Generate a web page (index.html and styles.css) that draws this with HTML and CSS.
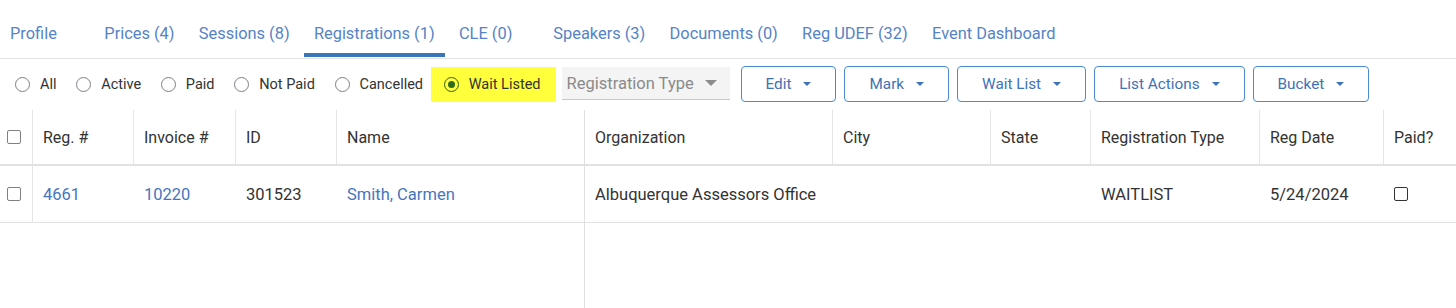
FILE: index.html
```html
<!DOCTYPE html>
<html>
<head>
<meta charset="utf-8">
<link rel="stylesheet" href="styles.css">
</head>
<body>
<nav class="tabs">
  <a class="tab">Profile</a>
  <a class="tab">Prices (4)</a>
  <a class="tab">Sessions (8)</a>
  <a class="tab active">Registrations (1)</a>
  <a class="tab">CLE (0)</a>
  <a class="tab">Speakers (3)</a>
  <a class="tab">Documents (0)</a>
  <a class="tab">Reg UDEF (32)</a>
  <a class="tab">Event Dashboard</a>
</nav>
<div class="toolbar">
  <div class="radios">
    <label class="radio"><span class="circle"></span>All</label>
    <label class="radio"><span class="circle"></span>Active</label>
    <label class="radio"><span class="circle"></span>Paid</label>
    <label class="radio"><span class="circle"></span>Not Paid</label>
    <label class="radio"><span class="circle"></span>Cancelled</label>
    <label class="radio selected"><span class="circle"></span>Wait Listed</label>
  </div>
  <div class="select">Registration Type<span class="sel-caret"></span></div>
  <div class="buttons">
    <button class="btn">Edit<span class="caret"></span></button>
    <button class="btn">Mark<span class="caret"></span></button>
    <button class="btn">Wait List<span class="caret"></span></button>
    <button class="btn">List Actions<span class="caret"></span></button>
    <button class="btn">Bucket<span class="caret"></span></button>
  </div>
</div>
<div class="grid">
  <div class="pane left">
    <div class="hrow">
      <div class="cell cb-col"><span class="check"></span></div>
      <div class="cell c-reg">Reg. #</div>
      <div class="cell c-inv">Invoice #</div>
      <div class="cell c-id">ID</div>
      <div class="cell c-name last">Name</div>
    </div>
    <div class="drow">
      <div class="cell cb-col"><span class="check"></span></div>
      <div class="cell c-reg link">4661</div>
      <div class="cell c-inv link">10220</div>
      <div class="cell c-id">301523</div>
      <div class="cell c-name link">Smith, Carmen</div>
    </div>
  </div>
  <div class="pane right">
    <div class="hrow">
      <div class="cell c-org">Organization</div>
      <div class="cell c-city">City</div>
      <div class="cell c-state">State</div>
      <div class="cell c-type">Registration Type</div>
      <div class="cell c-date">Reg Date</div>
      <div class="cell c-paid last">Paid?</div>
    </div>
    <div class="drow">
      <div class="cell c-org">Albuquerque Assessors Office</div>
      <div class="cell c-city"></div>
      <div class="cell c-state"></div>
      <div class="cell c-type">WAITLIST</div>
      <div class="cell c-date">5/24/2024</div>
      <div class="cell c-paid"><span class="check dark"></span></div>
    </div>
  </div>
</div>
</body>
</html>
```
FILE: styles.css
```css
* { box-sizing: border-box; }
html, body { margin: 0; height: 100%; }
body {
  font-family: Roboto, "Liberation Sans", Arial, sans-serif;
  color: #333;
  background: #fff;
  display: flex;
  flex-direction: column;
  overflow: hidden;
}

/* Tabs */
.tabs {
  display: flex;
  gap: 4.3px;
  height: 59px;
  border-bottom: 1px solid #e3e3e3;
  flex: none;
}
.tab {
  min-width: 90px;
  height: 57px;
  padding: 24px 10px 0;
  font-size: 16.4px;
  line-height: 20px;
  color: #5583c6;
  border-bottom: 4px solid transparent;
  white-space: nowrap;
}
.tab.active { border-bottom-color: #3a75b8; }

/* Toolbar */
.toolbar {
  display: flex;
  align-items: center;
  height: 49px;
  padding: 7px 0 6px;
  flex: none;
}
.radios {
  display: flex;
  align-items: center;
  gap: 19.7px;
  padding-left: 15px;
}
.radio {
  display: flex;
  align-items: center;
  gap: 10px;
  font-size: 14.5px;
  color: #333;
  height: 35px;
  white-space: nowrap;
}
.circle {
  width: 15px;
  height: 15px;
  border: 1.5px solid #7b7f88;
  border-radius: 50%;
  display: flex;
  align-items: center;
  justify-content: center;
}
.radio.selected {
  background: #ffff3c;
  padding: 0 15px 0 13px;
  margin-left: -12px;
}
.radio.selected .circle { border-color: #3d5a17; }
.radio.selected .circle::after {
  content: "";
  width: 7px;
  height: 7px;
  border-radius: 50%;
  background: #2f6a1c;
}

.select {
  margin-left: 6px;
  width: 168px;
  height: 33px;
  background: #f4f4f4;
  border-bottom: 1px solid #c9c9c9;
  font-size: 16.5px;
  color: #8a8a8a;
  display: flex;
  align-items: center;
  padding-left: 5px;
  margin-top: 1px;
  margin-bottom: 2px;
  white-space: nowrap;
}
.sel-caret {
  margin-left: 11px;
  width: 0; height: 0;
  border-left: 6px solid transparent;
  border-right: 6px solid transparent;
  border-top: 6px solid #8c8c8c;
}

.buttons {
  display: flex;
  gap: 8px;
  margin-left: 11px;
}
.btn {
  height: 36px;
  padding: 0 24px;
  border: 1px solid #4a8bd0;
  border-radius: 4px;
  background: #fff;
  color: #3f72b6;
  font-family: inherit;
  font-size: 15.3px;
  display: flex;
  align-items: center;
  gap: 12px;
  white-space: nowrap;
}
.caret {
  width: 0; height: 0;
  border-left: 4px solid transparent;
  border-right: 4px solid transparent;
  border-top: 4px solid #3f72b6;
}

/* Grid */
.grid {
  display: flex;
  flex: 1;
  padding-top: 2px;
}
.pane { display: flex; flex-direction: column; }
.pane.left { width: 585px; border-right: 1px solid #e0e0e0; flex: none; }
.pane.right { flex: 1; }
.hrow, .drow { display: flex; }
.hrow { height: 56px; border-bottom: 2px solid #e2e2e2; }
.drow { height: 57px; border-bottom: 1px solid #e2e2e2; }
.cell {
  display: flex;
  align-items: center;
  padding-left: 10px;
  font-size: 16.5px;
  white-space: nowrap;
  flex: none;
}
.hrow .cell { border-right: 1px solid #e6e6e6; font-size: 16px; }
.hrow .cell.last { border-right: none; }
.cb-col { width: 33px; padding-left: 7px; border-right: 1px solid #e6e6e6; }
.c-reg { width: 101px; }
.c-inv { width: 102px; }
.c-id { width: 101px; }
.c-name { flex: 1; }
.c-org { width: 248px; }
.c-city { width: 158px; }
.c-state { width: 100px; }
.c-type { width: 169px; }
.c-date { width: 124px; }
.c-paid { flex: 1; }
.link { color: #4675bd; }

.check {
  width: 14px;
  height: 14px;
  border: 1.5px solid #808080;
  border-radius: 2px;
}
.check.dark { border-color: #333; border-width: 1px; }
```
